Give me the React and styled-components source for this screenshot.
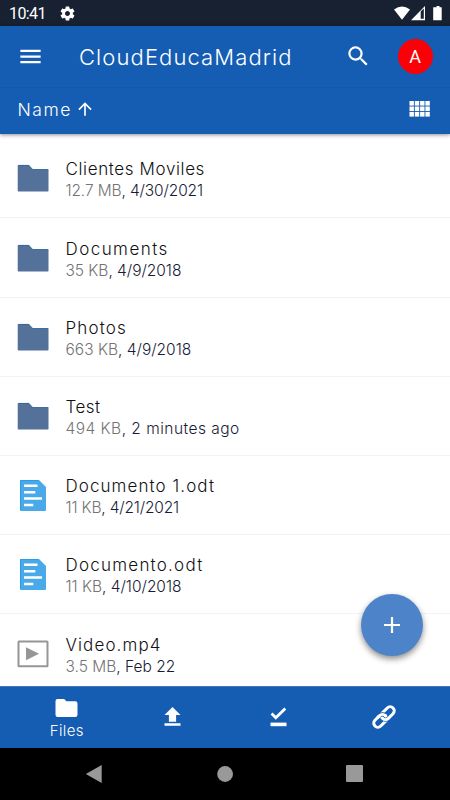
import React from 'react';
import styled, { createGlobalStyle } from 'styled-components';

const GlobalStyle = createGlobalStyle`
  body {
    margin: 0;
    background-color: #ffffff;
    font-family: 'Inter', 'Liberation Sans', sans-serif;
  }

  svg {
    display: block;
    flex: none;
  }
`;

const Screen = styled.div`
  position: relative;
  display: flex;
  flex-direction: column;
  width: 450px;
  height: 800px;
  overflow: hidden;
`;

const StatusBar = styled.div`
  display: flex;
  align-items: center;
  box-sizing: border-box;
  height: 26px;
  flex: none;
  padding: 1px 8px 0 9px;
  background-color: #172132;
  color: #ffffff;
`;

const Clock = styled.span`
  width: 49.5px;
  font-family: 'Roboto', sans-serif;
  font-size: 16px;
  line-height: 20px;
  letter-spacing: -0.6px;
`;

const StatusIcons = styled.div`
  display: flex;
  margin-left: auto;
  gap: 1px;
`;

const Header = styled.header`
  flex: none;
  height: 108px;
  background-color: #155db3;
  box-shadow: 0 1px 4px rgba(0, 0, 0, 0.45);
  color: #ffffff;
  z-index: 1;
`;

const Toolbar = styled.div`
  display: flex;
  align-items: center;
  box-sizing: border-box;
  height: 62px;
  padding: 0 17.5px 0 17px;
  border-bottom: 1px solid #1458a9;
`;

const Title = styled.h1`
  margin: 1px auto 0 35px;
  font-size: 22px;
  font-weight: 300;
  line-height: 28px;
  letter-spacing: 1.1px;
  white-space: nowrap;
`;

const Avatar = styled.div`
  width: 35px;
  height: 35px;
  margin-left: 26.5px;
  border-radius: 50%;
  background-color: #fb0007;
  font-family: 'Roboto', sans-serif;
  font-size: 18px;
  line-height: 36px;
  text-align: center;
`;

const SortBar = styled.div`
  display: flex;
  align-items: center;
  height: 42px;
  padding: 0 20px 0 17.5px;
`;

const SortLabel = styled.span`
  width: 57.5px;
  font-size: 17.5px;
  font-weight: 300;
  letter-spacing: 1.5px;
`;

const GridIcon = styled.svg`
  margin-left: auto;
`;

const FileList = styled.ul`
  flex: 1;
  min-height: 0;
  margin: 0;
  padding: 5.3px 0 0;
  overflow: hidden;
  list-style: none;
`;

const Row = styled.li`
  display: flex;
  align-items: center;
  box-sizing: border-box;
  height: 79.2px;
  padding: 0 17px;
  border-bottom: 1px solid #f3f3f3;
`;

const IconBox = styled.div`
  display: flex;
  justify-content: center;
  width: 32px;
  margin-right: 16.5px;
`;

const FileText = styled.div`
  padding-top: 4px;
  font-weight: 300;
  line-height: 22px;
  white-space: nowrap;
`;

const FileName = styled.div`
  color: #111114;
  font-size: 17px;
  letter-spacing: ${(props) => props.$spacing}px;
`;

const FileMeta = styled.div`
  color: #171a38;
  font-size: 15.5px;
  letter-spacing: ${(props) => props.$spacing}px;
`;

const FileSize = styled.span`
  color: #747474;
`;

const AddButton = styled.button`
  position: absolute;
  right: 27px;
  bottom: 144px;
  display: flex;
  align-items: center;
  justify-content: center;
  width: 62px;
  height: 62px;
  padding: 0;
  border: 0;
  border-radius: 50%;
  background-color: #4d84c9;
  box-shadow: 0 3px 6px rgba(0, 0, 0, 0.45);
`;

const TabBar = styled.nav`
  display: flex;
  flex: none;
  box-sizing: border-box;
  height: 61.5px;
  padding: 0 13.5px 0 14px;
  border-top: 1px solid #4577b8;
  background-color: #155db3;
  color: #ffffff;
`;

const Tab = styled.a`
  display: flex;
  flex: 1;
  flex-direction: column;
  align-items: center;
  justify-content: center;
`;

const TabLabel = styled.span`
  margin-top: 4.5px;
  margin-bottom: -5.5px;
  font-size: 15px;
  font-weight: 300;
  line-height: 20px;
  letter-spacing: 0.4px;
`;

const SystemBar = styled.div`
  display: flex;
  align-items: center;
  justify-content: space-between;
  box-sizing: border-box;
  flex: none;
  height: 52.5px;
  padding: 0 87px 0 85px;
  background-color: #000000;
`;

const FolderIcon = () => (
  <svg width="32" height="28" viewBox="0 0 32 28">
    <path
      d="M1.5 1H12l4 4.3h15q.5 0 .5.5v21q0 .7-.7.7H1.4q-.7 0-.7-.7V1.8q0-.8.8-.8z"
      fill="#547199"
    />
    <path d="M1.5 1.4H12M15.8 5.5h15.4" stroke="#2c66a5" strokeWidth=".8" />
  </svg>
);

const DocumentIcon = () => (
  <svg width="26" height="31" viewBox="0 0 26 31">
    <path d="M1 0h18l7 7v23q0 1-1 1H1q-1 0-1-1V1q0-1 1-1z" fill="#49a9e9" />
    <path d="M.5 30V.5h18" fill="none" stroke="#1f9ce8" strokeWidth=".8" />
    <path
      d="M4 5.7h13.5M4 12.2h11.3M4 18.5h18M4 25h9.3"
      stroke="#ffffff"
      strokeWidth="2.5"
    />
  </svg>
);

const VideoIcon = () => (
  <svg width="32" height="28" viewBox="0 0 32 28">
    <rect x="1.5" y="1.6" width="29" height="24.6" rx=".5" fill="none" stroke="#969696" strokeWidth="2" />
    <path d="M9 7.3l13 6.5-13 6.5z" fill="#969696" />
  </svg>
);

const icons = {
  folder: FolderIcon,
  document: DocumentIcon,
  video: VideoIcon,
};

const files = [
  { type: 'folder', name: 'Clientes Moviles', size: '12.7 MB', date: '4/30/2021', nameSpacing: 0.62, metaSpacing: -0.13 },
  { type: 'folder', name: 'Documents', size: '35 KB', date: '4/9/2018', nameSpacing: 1.45, metaSpacing: -0.03 },
  { type: 'folder', name: 'Photos', size: '663 KB', date: '4/9/2018', nameSpacing: 1.15, metaSpacing: 0 },
  { type: 'folder', name: 'Test', size: '494 KB', date: '2 minutes ago', nameSpacing: 0.5, metaSpacing: 0.48 },
  { type: 'document', name: 'Documento 1.odt', size: '11 KB', date: '4/21/2021', nameSpacing: 1.07, metaSpacing: -0.17 },
  { type: 'document', name: 'Documento.odt', size: '11 KB', date: '4/10/2018', nameSpacing: 1.23, metaSpacing: -0.02 },
  { type: 'video', name: 'Video.mp4', size: '3.5 MB', date: 'Feb 22', nameSpacing: 1.1, metaSpacing: 0 },
];

const FileRow = ({ file }) => {
  const Icon = icons[file.type];
  return (
    <Row>
      <IconBox>
        <Icon />
      </IconBox>
      <FileText>
        <FileName $spacing={file.nameSpacing}>{file.name}</FileName>
        <FileMeta $spacing={file.metaSpacing}>
          <FileSize>{file.size}</FileSize>, {file.date}
        </FileMeta>
      </FileText>
    </Row>
  );
};

const App = () => {
  return (
    <>
      <GlobalStyle />
      <Screen>
        <StatusBar>
          <Clock>10:41</Clock>
          <svg width="17" height="17" viewBox="0 0 24 24" fill="currentColor">
            <path d="M19.43 12.98c.04-.32.07-.64.07-.98s-.03-.66-.07-.98l2.11-1.65c.19-.15.24-.42.12-.64l-2-3.46c-.12-.22-.39-.3-.61-.22l-2.49 1c-.52-.4-1.08-.73-1.69-.98l-.38-2.65A.488.488 0 0 0 14 2h-4c-.25 0-.46.18-.49.42l-.38 2.65c-.61.25-1.17.59-1.69.98l-2.49-1c-.23-.09-.49 0-.61.22l-2 3.46c-.13.22-.07.49.12.64l2.11 1.65c-.04.32-.07.65-.07.98s.03.66.07.98l-2.11 1.65c-.19.15-.24.42-.12.64l2 3.46c.12.22.39.3.61.22l2.49-1c.52.4 1.08.73 1.69.98l.38 2.65c.03.24.24.42.49.42h4c.25 0 .46-.18.49-.42l.38-2.65c.61-.25 1.17-.59 1.69-.98l2.49 1c.23.09.49 0 .61-.22l2-3.46c.12-.22.07-.49-.12-.64l-2.11-1.65zM12 15.5c-1.93 0-3.5-1.57-3.5-3.5s1.57-3.5 3.5-3.5 3.5 1.57 3.5 3.5-1.57 3.5-3.5 3.5z" />
          </svg>
          <StatusIcons>
            <svg width="16" height="15" viewBox="0 0 16 15">
              <path d="M0 3.4Q8-2.4 16 3.4L8 13.7z" fill="#ffffff" />
            </svg>
            <svg width="15" height="15" viewBox="0 0 15 15">
              <path d="M14 0v14.3H0z" fill="#ffffff" />
              <path d="M9.7 5.6L12.8 2.5v10.3H9.7z" fill="#172132" />
            </svg>
            <svg width="15" height="15" viewBox="0 0 15 15">
              <path d="M7.7 1.3h1.8V0h3v1.3h2.2v13H6.2v-13z" fill="#ffffff" />
            </svg>
          </StatusIcons>
        </StatusBar>

        <Header>
          <Toolbar>
            <svg width="27" height="27" viewBox="0 0 24 24" fill="currentColor">
              <path d="M3 18h18v-2H3v2zm0-5h18v-2H3v2zm0-7v2h18V6H3z" />
            </svg>
            <Title>CloudEducaMadrid</Title>
            <svg width="26.5" height="26.5" viewBox="0 0 24 24" fill="currentColor">
              <path d="M15.5 14h-.79l-.28-.27A6.471 6.471 0 0 0 16 9.5 6.5 6.5 0 1 0 9.5 16c1.61 0 3.09-.59 4.23-1.57l.27.28v.79l5 4.99L20.49 19l-4.99-5zm-6 0C7.01 14 5 11.99 5 9.5S7.01 5 9.5 5 14 7.01 14 9.5 11.99 14 9.5 14z" />
            </svg>
            <Avatar>A</Avatar>
          </Toolbar>
          <SortBar>
            <SortLabel>Name</SortLabel>
            <svg width="20" height="20" viewBox="0 0 24 24" fill="currentColor">
              <path d="M4 12l1.41 1.41L11 7.83V20h2V7.83l5.58 5.59L20 12l-8-8-8 8z" />
            </svg>
            <GridIcon width="21" height="16" viewBox="0 0 21 16" fill="currentColor">
              {[0, 5.5, 11].map((y) =>
                [0.5, 5.8, 11.1, 16.4].map((x) => <rect key={`${x}-${y}`} x={x} y={y} width="4.4" height="4.6" />)
              )}
            </GridIcon>
          </SortBar>
        </Header>

        <FileList>
          {files.map((file) => (
            <FileRow key={file.name} file={file} />
          ))}
        </FileList>

        <AddButton aria-label="Add">
          <svg width="16" height="16" viewBox="0 0 16 16">
            <path d="M8 0v16M0 8h16" stroke="#ffffff" strokeWidth="2.2" />
          </svg>
        </AddButton>

        <TabBar>
          <Tab>
            <svg width="23" height="18" viewBox="0 0 23 18" fill="currentColor">
              <path d="M2.5 0h6.7l2.2 2.2h8.9q2.2 0 2.2 2.2v11.4q0 2.2-2.2 2.2H2.7Q.5 18 .5 15.8V2.2Q.5 0 2.5 0z" />
            </svg>
            <TabLabel>Files</TabLabel>
          </Tab>
          <Tab>
            <svg width="17" height="20" viewBox="0 0 17 20" fill="currentColor">
              <path d="M8.5 0l8 8h-4.4v6.8H4.9V8H.5zM.5 16.3h16v2.4H.5z" />
            </svg>
          </Tab>
          <Tab>
            <svg width="17" height="20" viewBox="0 0 17 20">
              <path d="M1.6 6.5l4.2 4.2L15.3 1.5" fill="none" stroke="currentColor" strokeWidth="2.9" />
              <path d="M.5 17.4h16" stroke="currentColor" strokeWidth="3.6" />
            </svg>
          </Tab>
          <Tab>
            <svg width="24" height="24" viewBox="0 0 24 24">
              <g transform="rotate(-45 12 12)" fill="none" strokeLinecap="round">
                <rect x="-.8" y="7.9" width="14.8" height="8.2" rx="4.1" stroke="currentColor" strokeWidth="3" />
                <path d="M13.5 7.9h7.2a4.1 4.1 0 0 1 0 8.2H14a4.1 4.1 0 0 1-4-4.1" stroke="#155db3" strokeWidth="4.4" strokeLinecap="butt" />
                <rect x="10" y="7.9" width="14.8" height="8.2" rx="4.1" stroke="currentColor" strokeWidth="3" />
                <path d="M9.2 7.9h.7a4.1 4.1 0 0 1 4.1 3.6" stroke="#155db3" strokeWidth="4.2" strokeLinecap="butt" />
                <path d="M7.5 7.9h2.4a4.1 4.1 0 0 1 4.1 4.1" stroke="currentColor" strokeWidth="3" />
              </g>
            </svg>
          </Tab>
        </TabBar>

        <SystemBar>
          <svg width="17" height="18" viewBox="0 0 17 18">
            <path d="M16.7 0v18L.8 9z" fill="#999999" />
          </svg>
          <svg width="17" height="16" viewBox="0 0 17 16">
            <circle cx="9.1" cy="8" r="7.9" fill="#999999" />
          </svg>
          <svg width="17" height="17" viewBox="0 0 17 17">
            <rect width="17" height="17" rx="1" fill="#999999" />
          </svg>
        </SystemBar>
      </Screen>
    </>
  );
};

export default App;
